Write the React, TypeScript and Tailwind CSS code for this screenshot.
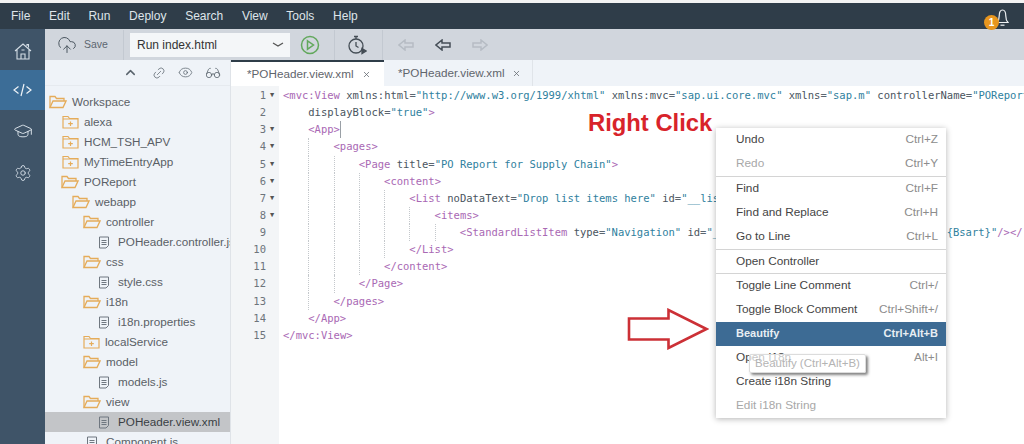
import { ChevronUp, CloudUpload, Eye, GraduationCap, Glasses, Link2, Settings, X } from 'lucide-react';

const menus = ['File', 'Edit', 'Run', 'Deploy', 'Search', 'View', 'Tools', 'Help'];

type TreeKind = 'open' | 'closed' | 'file';
const tree: { name: string; kind: TreeKind; pad: string; selected?: boolean }[] = [
  { name: 'Workspace', kind: 'open', pad: 'pl-[4px]' },
  { name: 'alexa', kind: 'closed', pad: 'pl-[17px]' },
  { name: 'HCM_TSH_APV', kind: 'closed', pad: 'pl-[17px]' },
  { name: 'MyTimeEntryApp', kind: 'closed', pad: 'pl-[17px]' },
  { name: 'POReport', kind: 'open', pad: 'pl-[16px]' },
  { name: 'webapp', kind: 'open', pad: 'pl-[27px]' },
  { name: 'controller', kind: 'open', pad: 'pl-[38px]' },
  { name: 'POHeader.controller.js', kind: 'file', pad: 'pl-[53px]' },
  { name: 'css', kind: 'open', pad: 'pl-[38px]' },
  { name: 'style.css', kind: 'file', pad: 'pl-[53px]' },
  { name: 'i18n', kind: 'open', pad: 'pl-[38px]' },
  { name: 'i18n.properties', kind: 'file', pad: 'pl-[53px]' },
  { name: 'localService', kind: 'closed', pad: 'pl-[38px]' },
  { name: 'model', kind: 'open', pad: 'pl-[38px]' },
  { name: 'models.js', kind: 'file', pad: 'pl-[53px]' },
  { name: 'view', kind: 'open', pad: 'pl-[38px]' },
  { name: 'POHeader.view.xml', kind: 'file', pad: 'pl-[53px]', selected: true },
  { name: 'Component.js', kind: 'file', pad: 'pl-[41px]' },
];

type Token = [string, 't' | 'a' | 'v' | 'p'];
const codeLines: { indent: number; fold?: boolean; tokens: Token[]; cursor?: boolean }[] = [
  {
    indent: 0,
    fold: true,
    tokens: [
      ['<mvc:View', 't'], [' xmlns:html', 'a'], ['=', 'p'], ['"http://www.w3.org/1999/xhtml"', 'v'],
      [' xmlns:mvc', 'a'], ['=', 'p'], ['"sap.ui.core.mvc"', 'v'], [' xmlns', 'a'], ['=', 'p'], ['"sap.m"', 'v'],
      [' controllerName', 'a'], ['=', 'p'], ['"POReport.controller.POHeader"', 'v'],
    ],
  },
  { indent: 1, tokens: [['displayBlock', 'a'], ['=', 'p'], ['"true"', 'v'], ['>', 't']] },
  { indent: 1, fold: true, tokens: [['<App>', 't']], cursor: true },
  { indent: 2, fold: true, tokens: [['<pages>', 't']] },
  { indent: 3, fold: true, tokens: [['<Page', 't'], [' title', 'a'], ['=', 'p'], ['"PO Report for Supply Chain"', 'v'], ['>', 't']] },
  { indent: 4, fold: true, tokens: [['<content>', 't']] },
  {
    indent: 5,
    fold: true,
    tokens: [['<List', 't'], [' noDataText', 'a'], ['=', 'p'], ['"Drop list items here"', 'v'], [' id', 'a'], ['=', 'p'], ['"__list0"', 'v'], ['>', 't']],
  },
  { indent: 6, fold: true, tokens: [['<items>', 't']] },
  {
    indent: 7,
    tokens: [
      ['<StandardListItem', 't'], [' type', 'a'], ['=', 'p'], ['"Navigation"', 'v'], [' id', 'a'], ['=', 'p'],
      ['"__item" title="{Ebeln}" description=', 'v'], ['"{Bsart}"', 'v'], ['/></', 't'],
    ],
  },
  { indent: 5, tokens: [['</List>', 't']] },
  { indent: 4, tokens: [['</content>', 't']] },
  { indent: 3, tokens: [['</Page>', 't']] },
  { indent: 2, tokens: [['</pages>', 't']] },
  { indent: 1, tokens: [['</App>', 't']] },
  { indent: 0, tokens: [['</mvc:View>', 't']] },
];

const tokenColor = { t: 'text-[#a968b4]', a: 'text-[#4a5560]', v: 'text-[#2f7f9e]', p: 'text-[#5b6670]' };

type MenuEntry = { label: string; keys?: string; disabled?: boolean; active?: boolean; sep?: boolean };
const contextMenu: MenuEntry[] = [
  { label: 'Undo', keys: 'Ctrl+Z' },
  { label: 'Redo', keys: 'Ctrl+Y', disabled: true },
  { label: 'Find', keys: 'Ctrl+F', sep: true },
  { label: 'Find and Replace', keys: 'Ctrl+H' },
  { label: 'Go to Line', keys: 'Ctrl+L' },
  { label: 'Open Controller', sep: true },
  { label: 'Toggle Line Comment', keys: 'Ctrl+/', sep: true },
  { label: 'Toggle Block Comment', keys: 'Ctrl+Shift+/' },
  { label: 'Beautify', keys: 'Ctrl+Alt+B', active: true },
  { label: 'Open I18n', keys: 'Alt+I' },
  { label: 'Create i18n String' },
  { label: 'Edit i18n String', disabled: true },
];

function TreeIcon({ kind }: { kind: TreeKind }) {
  if (kind === 'file') {
    return (
      <svg width="12" height="13" viewBox="0 0 12 13" fill="none" stroke="#6f7780" strokeWidth="1" className="mr-[8px] shrink-0">
        <path d="M1.5 1h9v8.5l-2.5 2.5h-6.5z" />
        <path d="M3.5 4.5h5M3.5 6.5h5M3.5 8.5h5" />
      </svg>
    );
  }
  if (kind === 'closed') {
    return (
      <svg width="17" height="14" viewBox="0 0 17 14" fill="none" stroke="#e5ac5a" strokeWidth="1.2" className="mr-[5px] shrink-0">
        <path d="M1 13V1.5h5l1.5 2H16V13z" />
        <path d="M1 4h15M8.5 6.5v4.5M6.2 8.7h4.6" />
      </svg>
    );
  }
  return (
    <svg width="18" height="14" viewBox="0 0 18 14" fill="none" stroke="#e5ac5a" strokeWidth="1.3" className="mr-[5px] shrink-0">
      <path d="M1 12.5V1.5h5l1.5 2H15v2.5" />
      <path d="M1 12.5l3-6.5h13l-3 6.5z" />
    </svg>
  );
}

function OutlineArrow({ dir, color }: { dir: 'left' | 'right'; color: string }) {
  return (
    <svg width="16" height="12" viewBox="0 0 16 12" fill="none" stroke={color} strokeWidth="1.5">
      {dir === 'left' ? <path d="M7 1L1 6l6 5V8h8V4H7z" /> : <path d="M9 1l6 5-6 5V8H1V4h8z" />}
    </svg>
  );
}

function Separator() {
  return <div className="h-[30px] w-px bg-[#c3c9d1]" />;
}

export default function App() {
  return (
    <div className="relative flex h-[444px] w-[1024px] flex-col overflow-hidden bg-white font-['Liberation_Sans',Arial,sans-serif]">
      <div className="h-[3px] shrink-0 bg-[#f3f3f3]" />

      <header className="flex h-[26px] shrink-0 items-center justify-between bg-[#2f3d49] pl-[11px] pr-[14px]">
        <nav className="flex gap-[18.7px] text-[12px] text-[#dfe5ea]">
          {menus.map((m) => (
            <span key={m}>{m}</span>
          ))}
        </nav>
        <div className="relative h-[20px] w-[20px]">
          <svg width="13" height="18" viewBox="0 0 13 18" fill="none" stroke="#eef1f3" strokeWidth="1.2" className="absolute right-[1px] top-[3px]">
            <path d="M1 13.5c1.5-1.5 2.2-3 2.2-6.5C3.2 3.2 4.4 1 6.5 1s3.3 2.2 3.3 6c0 3.500.7 5 2.200 6.500z" />
            <path d="M4.500 16.200h4" />
          </svg>
          <span className="absolute right-[11px] top-[9px] flex h-[15px] w-[15px] items-center justify-center rounded-full bg-[#e8961e] text-[10px] font-bold text-white">
            1
          </span>
        </div>
      </header>

      <div className="flex min-h-0 flex-1">
        <aside className="flex w-[45px] shrink-0 flex-col bg-[#3f5468] text-[#d5dee6]">
          <div className="flex h-[41px] items-center justify-center pt-[4px]">
            <svg width="18" height="17" viewBox="0 0 18 17" fill="none" stroke="currentColor" strokeWidth="1.1">
              <path d="M1 8L9 1l8 7M3 6.500V16h12V6.500M7 16v-5h4v5M7.500 7h3M13 3V1.500h1.500V4.500" />
            </svg>
          </div>
          <div className="flex h-[40px] items-center justify-center bg-[#3c6d97]">
            <svg width="19" height="14" viewBox="0 0 19 14" fill="none" stroke="#eef3f7" strokeWidth="1.2">
              <path d="M5.500 3.500L1 7l4.500 3.500M13.500 3.500L18 7l-4.500 3.500M11 1L8 13" />
            </svg>
          </div>
          <div className="flex h-[41px] items-center justify-center">
            <GraduationCap className="h-[20px] w-[20px]" strokeWidth={1.2} />
          </div>
          <div className="flex h-[41px] items-center justify-center pt-[2px]">
            <Settings className="h-[18px] w-[18px]" strokeWidth={1.2} />
          </div>
        </aside>

        <div className="flex min-w-0 flex-1 flex-col">
          <div className="flex h-[31px] shrink-0 items-center bg-[#d1d6dd]">
            <CloudUpload className="ml-[10px] h-[20px] w-[24px] text-[#4b5660]" strokeWidth={1.2} />
            <span className="ml-[5px] w-[39px] text-[10.5px] text-[#5d6770]">Save</span>
            <Separator />
            <div className="ml-[6px] flex h-[24px] w-[160px] items-center justify-between bg-[#f4f6f8] pl-[7px] pr-[6px] text-[12px] text-[#333]">
              Run index.html
              <svg width="12" height="6" viewBox="0 0 12 6" fill="none" stroke="#555" strokeWidth="1.3">
                <path d="M1 1l5 3 5-3" />
              </svg>
            </div>
            <svg width="20" height="20" viewBox="0 0 20 20" fill="none" stroke="#62a85c" strokeWidth="1.5" className="ml-[10px]">
              <circle cx="10" cy="10" r="8.5" />
              <path d="M7.5 5.8l6 4.2-6 4.2z" />
            </svg>
            <div className="ml-[14px]">
              <Separator />
            </div>
            <svg width="20" height="20" viewBox="0 0 20 20" fill="none" stroke="#444d55" strokeWidth="1.3" className="ml-[12px]">
              <circle cx="9" cy="11" r="7" />
              <path d="M7 1.500h4M9 1.500v2.500M9 7v4l2.500 1.500" />
              <path d="M15 13.500l4 2.500-4 2.500z" fill="#444d55" />
            </svg>
            <div className="ml-[15px]">
              <Separator />
            </div>
            <div className="ml-[15px] flex items-center gap-[21px]">
              <OutlineArrow dir="left" color="#b6bcc4" />
              <OutlineArrow dir="left" color="#454e57" />
              <OutlineArrow dir="right" color="#b6bcc4" />
            </div>
          </div>

          <div className="flex min-h-0 flex-1">
            <section className="w-[186px] shrink-0 overflow-hidden border-r border-[#dfe3e8] bg-[#eff3f8]">
              <div className="mb-[6px] flex h-[26px] items-center justify-end gap-[12px] border-b border-[#e6eaef] pr-[9px] text-[#5a646d]">
                <ChevronUp className="mr-[2px] h-[15px] w-[15px]" strokeWidth={2.4} />
                <Link2 className="h-[14px] w-[14px] -rotate-45" strokeWidth={1.2} />
                <Eye className="h-[15px] w-[15px]" strokeWidth={1.2} />
                <Glasses className="h-[16px] w-[16px]" strokeWidth={1.2} />
              </div>
              <ul className="text-[11.7px] text-[#5a5f66]">
                {tree.map((item) => (
                  <li
                    key={item.name}
                    className={`flex h-[20px] items-center whitespace-nowrap ${item.pad} ${item.selected ? 'bg-[#c3c5c8] text-[#3a3f44]' : ''}`}
                  >
                    <TreeIcon kind={item.kind} />
                    {item.name}
                  </li>
                ))}
              </ul>
            </section>

            <section className="flex min-w-0 flex-1 flex-col">
              <div className="flex h-[26px] shrink-0 bg-[#eff3f8] text-[11.7px] text-[#5f656c]">
                <div className="flex w-[153px] items-center border-t-2 border-[#2f3d49] bg-white pl-[16px]">
                  <span className="w-[115px]">*POHeader.view.xml</span>
                  <X className="h-[9px] w-[9px]" strokeWidth={2} />
                </div>
                <div className="flex w-[149px] items-center border-r border-[#e0e4e9] pl-[14px]">
                  <span className="w-[114px]">*POHeader.view.xml</span>
                  <X className="h-[9px] w-[9px]" strokeWidth={2} />
                </div>
              </div>

              <div className="flex min-h-0 flex-1 overflow-hidden pt-px font-['DejaVu_Sans_Mono',monospace] text-[10.5px] leading-[17.14px]">
                <div className="-mt-px w-[48px] shrink-0 bg-[#f3f5f7] pt-px text-[#6d747b]">
                  {codeLines.map((line, i) => (
                    <div key={i} className="flex h-[17.14px] items-center">
                      <span className="w-[35px] text-right">{i + 1}</span>
                      {line.fold && <span className="ml-[4px] text-[7px] text-[#555]">▼</span>}
                    </div>
                  ))}
                </div>
                <div className="min-w-0 flex-1 overflow-hidden pl-[4px]">
                  {codeLines.map((line, i) => (
                    <div key={i} className="flex h-[17.14px] whitespace-pre">
                      {Array.from({ length: line.indent }).map((_, level) => (
                        <span
                          key={level}
                          className={`h-full w-[25.28px] shrink-0 ${level > 0 ? 'border-l border-dotted border-[#c4c8cc]' : ''}`}
                        />
                      ))}
                      {line.tokens.map(([text, kind], t) => (
                        <span key={t} className={tokenColor[kind]}>
                          {text}
                        </span>
                      ))}
                      {line.cursor && <span className="h-full w-px bg-[#9aa0a6]" />}
                    </div>
                  ))}
                </div>
              </div>
            </section>
          </div>
        </div>
      </div>

      <div className="absolute left-[588px] top-[109px] text-[23.8px] font-bold leading-[28px] text-[#d8232a]">Right Click</div>

      <svg width="82" height="42" viewBox="0 0 82 42" fill="none" stroke="#cc3036" strokeWidth="2.6" className="absolute left-[627px] top-[308px]">
        <path d="M2 10.5h39.5V2L79.5 21 41.5 40v-8.5H2z" />
      </svg>

      <div className="absolute left-[716px] top-[128px] w-[230px] bg-white text-[11.8px] text-[#444] shadow-[0_1px_6px_rgba(0,0,0,0.3)]">
        {contextMenu.map((entry) => (
          <div
            key={entry.label}
            className={`flex h-[24.2px] items-center justify-between pl-[20px] pr-[8px] ${entry.sep ? 'border-t border-[#d4d4d4]' : ''} ${
              entry.active ? 'bg-[#3d6b94] text-[11px] font-bold text-[#e8eef3]' : entry.disabled ? 'text-[#a8a8a8]' : ''
            }`}
          >
            <span>{entry.label}</span>
            {entry.keys && <span className={entry.active ? '' : 'text-[#8c8c8c]'}>{entry.keys}</span>}
          </div>
        ))}
      </div>

      <div className="absolute left-[749px] top-[354px] flex h-[19px] w-[117px] items-center justify-center rounded-[2px] border border-[#dcdcdc] bg-white/70 text-[11.5px] text-[#b4b4b4] shadow-[2px_2px_3px_rgba(0,0,0,0.5)]">
        Beautify (Ctrl+Alt+B)
      </div>
    </div>
  );
}
